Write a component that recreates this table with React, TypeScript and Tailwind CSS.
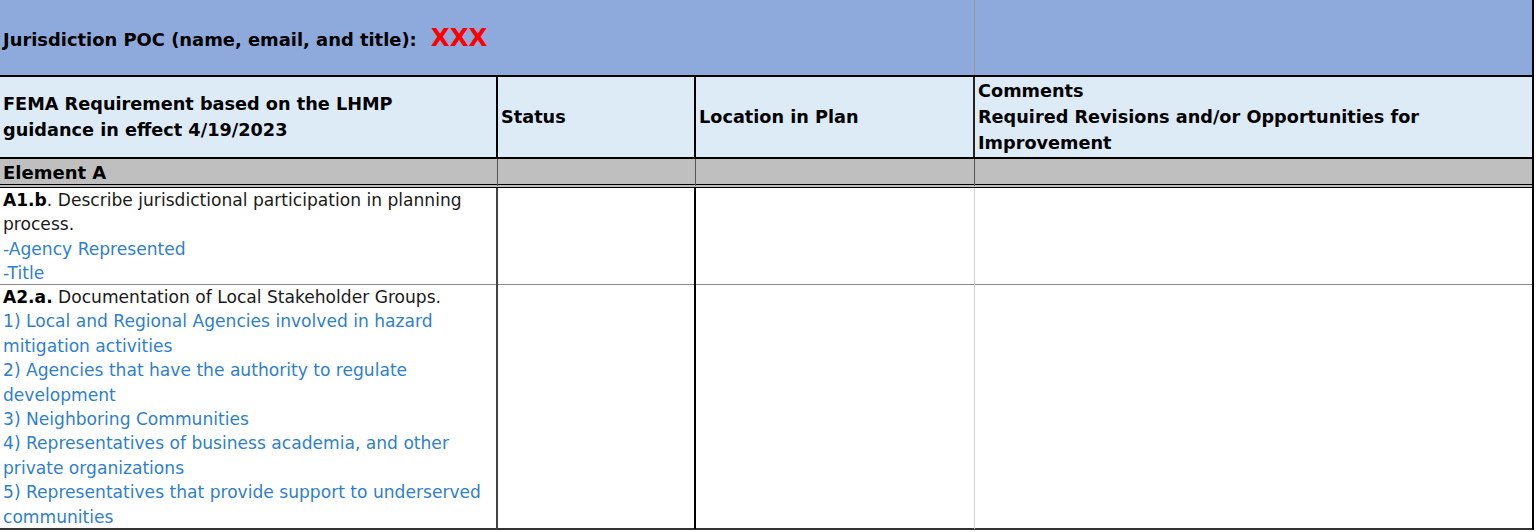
import React from 'react';

const font = { fontFamily: '"DejaVu Sans", "Liberation Sans", sans-serif' };

const cols = 'grid grid-cols-[498px_198px_279px_557px]';

export default function App() {
  return (
    <div className="w-[1536px] h-[532px] overflow-hidden bg-white text-black" style={font}>
      <div className="w-[1534px] border-r-2 border-black">
        {/* POC band */}
        <div className={`${cols} h-[75px] bg-[#8EA9DB]`}>
          <div className="col-span-3 flex items-center pl-[3px] pt-[6px] border-r border-[#9a9a9a]">
            <span className="text-[17.9px] font-bold">Jurisdiction POC (name, email, and title):</span>
            <span className="ml-[14px] -mt-[4px] text-[24.5px] font-bold text-[#FF0000] leading-none">XXX</span>
          </div>
          <div />
        </div>

        {/* Column headers */}
        <div className={`${cols} h-[82px] bg-[#DDEBF7] border-t-2 border-black font-bold text-[17.7px] leading-[26px]`}>
          <div className="flex flex-col justify-center pl-[3px] border-r-2 border-black">
            <span>FEMA Requirement based on the LHMP</span>
            <span>guidance in effect 4/19/2023</span>
          </div>
          <div className="flex items-center pl-[3px] border-r-2 border-black">Status</div>
          <div className="flex items-center pl-[3px] border-r-2 border-[#222]">Location in Plan</div>
          <div className="flex flex-col justify-center pl-[3px]">
            <span>Comments</span>
            <span>Required Revisions and/or Opportunities for</span>
            <span>Improvement</span>
          </div>
        </div>

        {/* Element A */}
        <div className={`${cols} h-[31px] bg-[#BFBFBF] border-t-2 border-black border-b-4 border-double`}>
          <div className="flex items-center pl-[3px] text-[18px] font-bold border-r border-[#555]">Element A</div>
          <div className="border-r border-[#555]" />
          <div className="border-r border-[#555]" />
          <div />
        </div>

        {/* A1.b */}
        <div className={`${cols} h-[97px] border-b border-[#8a8a8a] text-[17.1px] leading-[24.4px] text-[#1a1a1a]`}>
          <div className="pl-[3px] border-r-2 border-[#444] whitespace-nowrap">
            <div><span className="font-bold text-black">A1.b</span>. Describe jurisdictional participation in planning</div>
            <div>process.</div>
            <div className="text-[#2F80CC]">-Agency Represented</div>
            <div className="text-[#2F80CC]">-Title</div>
          </div>
          <div className="border-r-2 border-black" />
          <div className="border-r border-[#cfcfcf]" />
          <div />
        </div>

        {/* A2.a */}
        <div className={`${cols} h-[245px] border-b-2 border-[#333] text-[17.1px] leading-[24.4px] text-[#1a1a1a]`}>
          <div className="pl-[3px] border-r-2 border-[#444] whitespace-nowrap">
            <div><span className="font-bold text-black">A2.a.</span> Documentation of Local Stakeholder Groups.</div>
            <div className="text-[#2F80CC]">
              <div>1) Local and Regional Agencies involved in hazard</div>
              <div>mitigation activities</div>
              <div>2) Agencies that have the authority to regulate</div>
              <div>development</div>
              <div>3) Neighboring Communities</div>
              <div>4) Representatives of business academia, and other</div>
              <div>private organizations</div>
              <div>5) Representatives that provide support to underserved</div>
              <div>communities</div>
            </div>
          </div>
          <div className="border-r-2 border-black" />
          <div className="border-r border-[#cfcfcf]" />
          <div />
        </div>
      </div>
    </div>
  );
}
